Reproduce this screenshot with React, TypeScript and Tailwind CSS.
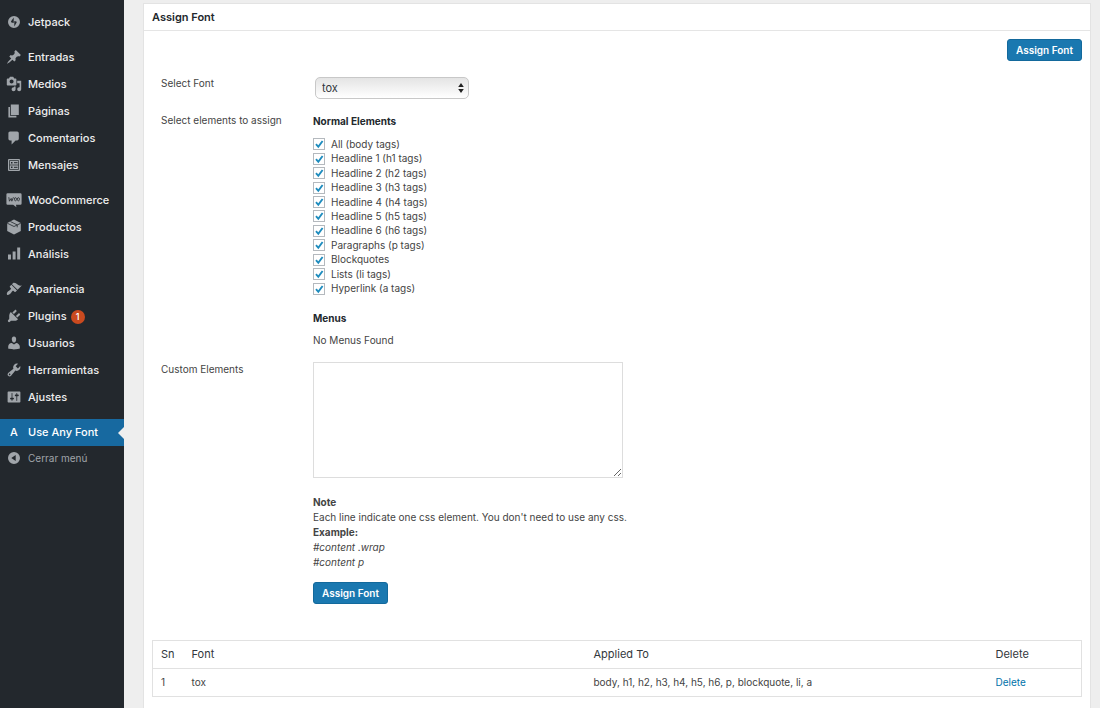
import type { ReactNode } from "react";

const paths = {
  post: "M10.44 3.02l1.82-1.82 6.36 6.35-1.83 1.82c-1.05-.68-2.48-.57-3.41.36l-.75.75c-.92.93-1.04 2.35-.35 3.41l-1.83 1.82-2.41-2.41-2.8 2.79c-.42.42-3.38 2.71-3.8 2.29s1.86-3.39 2.28-3.81l2.79-2.79L4.1 9.36l1.83-1.82c1.05.69 2.48.57 3.4-.36l.75-.75c.93-.92 1.05-2.35.36-3.41z",
  media: "M13 11V4c0-.55-.45-1-1-1h-1.67L9 1H5L3.67 3H2c-.55 0-1 .45-1 1v7c0 .55.45 1 1 1h10c.55 0 1-.45 1-1zM7 4.5c1.38 0 2.5 1.12 2.5 2.5S8.38 9.5 7 9.5 4.5 8.38 4.5 7 5.62 4.5 7 4.5zM14 6h5v10.5c0 1.38-1.12 2.5-2.5 2.5S14 17.88 14 16.5s1.12-2.5 2.5-2.5c.17 0 .34.02.5.05V9h-3V6zm-4 8.05V13h2v3.5c0 1.38-1.12 2.5-2.5 2.5S7 17.88 7 16.5 8.12 14 9.5 14c.17 0 .34.02.5.05z",
  page: "M6 15V2h10v13H6zm-1 1h8v2H3V5h2v11z",
  comments: "M5 2h9c1.1 0 2 .9 2 2v7c0 1.1-.9 2-2 2h-2l-5 5v-5H5c-1.1 0-2-.9-2-2V4c0-1.1.9-2 2-2z",
  chart: "M14 2h3.700v15H14zM8.300 7H12v10H8.300zM2.500 10.500h3.700V17H2.500z",
  appearance: "M14.48 11.06L7.41 3.99l1.5-1.5c.5-.56 2.3-.47 3.51.32 1.21.8 1.43 1.28 2.91 2.1 1.18.64 2.45 1.26 4.45.85zm-.71.71L6.7 4.7 4.93 6.47c-.39.39-.39 1.02 0 1.41l1.06 1.06c.39.39.39 1.03 0 1.42-.6.6-1.43 1.11-2.21 1.69-.35.26-.7.53-1.01.84C1.43 14.23.4 16.08 1.4 17.07c.99 1 2.84-.03 4.18-1.36.31-.31.58-.66.85-1.02.57-.78 1.08-1.61 1.69-2.21.39-.39 1.02-.39 1.41 0l1.06 1.06c.39.39 1.02.39 1.41 0z",
  plugins: "M13.11 4.36L9.87 7.6 8 5.73l3.24-3.24c.35-.34 1.05-.2 1.56.32.52.51.66 1.21.31 1.55zm-8 1.77l.91-1.12 9.01 9.01-1.19.84c-.71.71-2.63 1.16-3.82 1.16H6.14L4.9 17.26c-.59.59-1.54.59-2.12 0-.59-.58-.59-1.53 0-2.12l1.24-1.24v-3.88c0-1.13.4-3.19 1.09-3.89zm7.26 3.97l3.24-3.24c.34-.35 1.04-.21 1.55.31.52.51.66 1.21.31 1.55l-3.24 3.25z",
  users: "M10 9.25c-2.27 0-2.73-3.44-2.73-3.44C7 4.02 7.82 2 9.97 2c2.16 0 2.98 2.02 2.71 3.81 0 0-.41 3.44-2.68 3.44zm0 2.57L12.72 10c2.39 0 4.52 2.33 4.52 4.53v2.49s-3.65 1.13-7.24 1.13c-3.65 0-7.24-1.13-7.24-1.13v-2.49c0-2.25 1.94-4.48 4.47-4.48z",
  tools: "M16.68 9.77c-1.34 1.34-3.3 1.67-4.95.99l-5.41 6.52c-.99.99-2.59.99-3.58 0s-.99-2.59 0-3.57l6.52-5.42c-.68-1.65-.35-3.61.99-4.95 1.28-1.28 3.12-1.62 4.72-1.06l-2.89 2.89 2.82 2.82 2.86-2.87c.53 1.58.18 3.39-1.08 4.65zM3.81 16.21c.4.39 1.04.39 1.43 0 .4-.4.4-1.04 0-1.43-.39-.4-1.03-.4-1.43 0-.39.39-.39 1.03 0 1.43z",
  settings: "M18 16V4c0-.55-.45-1-1-1H3c-.55 0-1 .45-1 1v12c0 .55.45 1 1 1h14c.55 0 1-.45 1-1zM8 11h1c.55 0 1 .45 1 1s-.45 1-1 1H8v1.5c0 .28-.22.5-.5.5s-.5-.22-.5-.5V13H6c-.55 0-1-.45-1-1s.45-1 1-1h1V5.5c0-.28.22-.5.5-.5s.5.22.5.5V11zm5-2h-1c-.55 0-1-.45-1-1s.45-1 1-1h1V5.5c0-.28.22-.5.5-.5s.5.22.5.5V7h1c.55 0 1 .45 1 1s-.45 1-1 1h-1v5.5c0 .28-.22.5-.5.5s-.5-.22-.5-.5V9z",
};

function Glyph({ d }: { d: string }) {
  return (
    <svg viewBox="0 0 20 20" className="size-4" fill="currentColor" fillRule="evenodd" aria-hidden="true">
      <path d={d} />
    </svg>
  );
}

const jetpack = (
  <svg viewBox="0 0 32 32" className="size-3" fill="currentColor" fillRule="evenodd" aria-hidden="true">
    <path d="M16 0a16 16 0 1 0 0 32 16 16 0 0 0 0-32zM15.200 18.700l-5.500-1.400c-1.400-.4-2.100-2-1.400-3.300L15.200 4zM22.700 17.800L16.800 28V13.200l5.200 1.300c1.500.4 1.500 2.100.7 3.300z" />
  </svg>
);

const feedback = (
  <svg viewBox="0 0 16 16" className="size-4" fill="none" aria-hidden="true">
    <rect x="2" y="2" width="12" height="12" rx="1" fill="currentColor" />
    <path d="M3.500 3.500h9v9h-9zM3.500 8h9" stroke="#23282d" strokeWidth="0.7" />
    <path d="M8 5.700h3.500M8 10.300h3.500" stroke="#23282d" strokeWidth="1" />
    <path d="M5 5h1.500v1.500H5zM5 9.500h1.500V11H5z" fill="#23282d" />
  </svg>
);

const products = (
  <svg viewBox="0 0 20 20" className="size-4" fill="none" aria-hidden="true">
    <path d="M10 .5L18.500 5v10L10 19.500 1.500 15V5z" fill="currentColor" />
    <path d="M1.500 5.200L10 9.400l8.500-4.200M5.500 3.200l8.500 4.200v3" stroke="#23282d" strokeWidth="1" />
  </svg>
);

const woo = (
  <svg viewBox="0 0 20 20" className="size-4" fill="none" aria-hidden="true">
    <path d="M2 1.500h16q1.500 0 1.500 1.500v11.500q0 1.500-1.500 1.500h-5.500L13 19l-4-3H2Q.5 16 .5 14.500V3Q.5 1.500 2 1.500z" fill="currentColor" />
    <path d="M3.500 6.500l.8 5L6.500 8l.8 3.500L9.300 6.500" stroke="#23282d" strokeWidth="1" />
    <ellipse cx="11.800" cy="9" rx="1.300" ry="2" stroke="#23282d" strokeWidth="1" />
    <ellipse cx="15.500" cy="9" rx="1.300" ry="2" stroke="#23282d" strokeWidth="1" />
  </svg>
);

const collapse = (
  <svg viewBox="0 0 20 20" className="size-3" fill="currentColor" fillRule="evenodd" aria-hidden="true">
    <path d="M10 0a10 10 0 1 0 0 20 10 10 0 0 0 0-20zM12.800 5v10L5.500 10z" />
  </svg>
);

type Item = { label: string; icon: ReactNode; badge?: string };

const groups: Item[][] = [
  [{ label: "Jetpack", icon: jetpack }],
  [
    { label: "Entradas", icon: <Glyph d={paths.post} /> },
    { label: "Medios", icon: <Glyph d={paths.media} /> },
    { label: "Páginas", icon: <Glyph d={paths.page} /> },
    { label: "Comentarios", icon: <Glyph d={paths.comments} /> },
    { label: "Mensajes", icon: feedback },
  ],
  [
    { label: "WooCommerce", icon: woo },
    { label: "Productos", icon: products },
    { label: "Análisis", icon: <Glyph d={paths.chart} /> },
  ],
  [
    { label: "Apariencia", icon: <Glyph d={paths.appearance} /> },
    { label: "Plugins", icon: <Glyph d={paths.plugins} />, badge: "1" },
    { label: "Usuarios", icon: <Glyph d={paths.users} /> },
    { label: "Herramientas", icon: <Glyph d={paths.tools} /> },
    { label: "Ajustes", icon: <Glyph d={paths.settings} /> },
  ],
];

const elements = [
  "All (body tags)",
  "Headline 1 (h1 tags)",
  "Headline 2 (h2 tags)",
  "Headline 3 (h3 tags)",
  "Headline 4 (h4 tags)",
  "Headline 5 (h5 tags)",
  "Headline 6 (h6 tags)",
  "Paragraphs (p tags)",
  "Blockquotes",
  "Lists (li tags)",
  "Hyperlink (a tags)",
];

function Sidebar() {
  return (
    <nav className="w-31 shrink-0 bg-[#23282d] pt-[9px] text-[11px] font-medium text-[#eee]">
      <div className="flex flex-col gap-2">
        {groups.map((group) => (
          <ul key={group[0].label}>
            {group.map((item) => (
              <li key={item.label}>
                <a href="#" className="flex h-[27px] items-center">
                  <span className="flex w-7 shrink-0 justify-center pb-0.5 text-[#a0a5aa]">{item.icon}</span>
                  {item.label}
                  {item.badge && (
                    <span className="ml-1 flex size-3.5 items-center justify-center rounded-full bg-[#ca4a1f] text-[9px] text-white">
                      {item.badge}
                    </span>
                  )}
                </a>
              </li>
            ))}
          </ul>
        ))}
        <a href="#" aria-current="page" className="relative flex h-[27px] items-center bg-[#1769a0] text-white">
          <span className="flex w-7 justify-center">A</span>
          Use Any Font
          <svg viewBox="0 0 6 12" className="absolute right-0 h-3 w-1.5" fill="#eeeeee" aria-hidden="true">
            <path d="M6 0v12L0 6z" />
          </svg>
        </a>
      </div>
      <button type="button" className="flex h-6 items-center text-[10px] font-normal text-[#a0a5aa]">
        <span className="flex w-7 shrink-0 justify-center">{collapse}</span>
        Cerrar menú
      </button>
    </nav>
  );
}

function AssignButton() {
  return (
    <button
      type="submit"
      className="block h-[22px] rounded-[3px] border border-[#13699c] bg-[#1a78b0] px-2 text-[10px] font-semibold text-white"
    >
      Assign Font
    </button>
  );
}

function CheckRow({ label }: { label: string }) {
  return (
    <label className="flex items-center gap-1.5">
      <span className="grid size-3 place-items-center">
        <input
          type="checkbox"
          defaultChecked
          className="peer col-start-1 row-start-1 size-3 appearance-none border border-[#b4b9be] bg-white"
        />
        <svg
          viewBox="0 0 12 12"
          className="pointer-events-none invisible col-start-1 row-start-1 size-3 peer-checked:visible"
          fill="none"
          stroke="#1e8cbe"
          strokeWidth="1.9"
          aria-hidden="true"
        >
          <path d="M3 6.200l2.300 2.600L9.600 3" />
        </svg>
      </span>
      {label}
    </label>
  );
}

function AssignForm() {
  return (
    <form className="grid grid-cols-[152px_1fr] pl-[9px]" onSubmit={(e) => e.preventDefault()}>
      <label htmlFor="font" className="pt-[15px] leading-[15px]">
        Select Font
      </label>
      <div className="pt-4 pl-0.5">
        <div className="relative w-[154px]">
          <select
            id="font"
            className="block h-[22px] w-full appearance-none rounded-[5px] border border-[#c8c8c8] bg-linear-to-b from-[#e4e4e4] to-white px-1.5 text-[11px] text-[#32373c]"
          >
            <option>tox</option>
          </select>
          <svg
            viewBox="0 0 6 10"
            className="pointer-events-none absolute top-1.5 right-[5px] h-2.5 w-1.5"
            fill="#222222"
            aria-hidden="true"
          >
            <path d="M3 0l2.800 4H.2zM3 10L.2 6h5.600z" />
          </svg>
        </div>
      </div>

      <p className="pt-[14px] leading-[15px]">Select elements to assign</p>
      <div className="pt-[15px]">
        <h3 className="leading-[15px] font-bold text-[#23282d]">Normal Elements</h3>
        <div className="mt-2 grid h-[159px] auto-rows-fr">
          {elements.map((label) => (
            <CheckRow key={label} label={label} />
          ))}
        </div>
        <h3 className="mt-[15px] leading-[15px] font-bold text-[#23282d]">Menus</h3>
        <p className="mt-[7px] leading-[15px]">No Menus Found</p>
      </div>

      <label htmlFor="custom" className="pt-[14px] leading-[15px]">
        Custom Elements
      </label>
      <div className="pt-[14px]">
        <textarea id="custom" className="block h-29 w-[310px] border border-[#dddddd] bg-white p-1" />
        <div className="mt-[17px] leading-[15px]">
          <p className="font-bold">Note</p>
          <p>Each line indicate one css element. You don't need to use any css.</p>
          <p className="font-bold">Example:</p>
          <p className="italic">#content .wrap</p>
          <p className="italic">#content p</p>
        </div>
        <div className="mt-3">
          <AssignButton />
        </div>
      </div>
    </form>
  );
}

function FontTable() {
  return (
    <table className="w-full table-fixed border-collapse border border-[#e1e1e1] text-left">
      <colgroup>
        <col className="w-[31px]" />
        <col />
        <col />
        <col className="w-[94px]" />
      </colgroup>
      <thead className="text-[11px] text-[#32373c]">
        <tr className="h-7 border-b border-[#e1e1e1]">
          <th className="pl-2 font-normal">Sn</th>
          <th className="pl-2 font-normal">Font</th>
          <th className="pl-2 font-normal">Applied To</th>
          <th className="pl-2 font-normal">Delete</th>
        </tr>
      </thead>
      <tbody>
        <tr className="h-7">
          <td className="pl-2">1</td>
          <td className="pl-2">tox</td>
          <td className="pl-2">body, h1, h2, h3, h4, h5, h6, p, blockquote, li, a</td>
          <td className="pl-2">
            <a href="#" className="text-[#0073aa]">
              Delete
            </a>
          </td>
        </tr>
      </tbody>
    </table>
  );
}

export default function App() {
  return (
    <div className="flex min-h-screen bg-[#eeeeee] font-['Inter',sans-serif] text-[10px] text-[#444444]">
      <Sidebar />
      <main className="flex min-w-0 flex-1 flex-col pt-[3px] pr-[9px] pl-[19px]">
        <section className="flex-1 border border-b-0 border-[#e3e3e3] bg-white">
          <h2 className="flex h-[27px] items-center border-b border-[#e5e5e5] px-2 text-[11px] font-semibold text-[#23282d]">
            Assign Font
          </h2>
          <div className="px-2 pt-2">
            <div className="flex justify-end">
              <AssignButton />
            </div>
            <AssignForm />
            <div className="pt-9 pb-2.5">
              <FontTable />
            </div>
          </div>
        </section>
      </main>
    </div>
  );
}
